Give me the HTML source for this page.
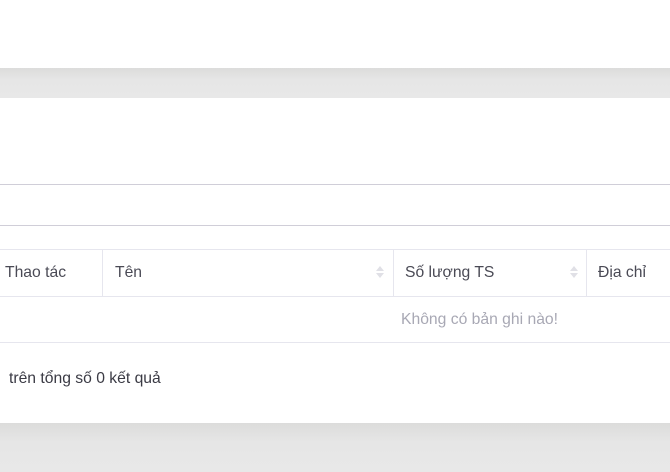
<!DOCTYPE html>
<html><head><meta charset="utf-8"><style>
body{margin:0;width:670px;height:472px;background:#fff;position:relative;overflow:hidden;font-family:"Liberation Sans",sans-serif;font-size:15.7px;color:#4a4a55}
.g{position:absolute;left:0;width:670px;background:linear-gradient(#dcdcdb,#e6e6e6 40%,#e8e8e8)}
.l{position:absolute;left:0;width:670px;height:1px}
.t{position:absolute;white-space:nowrap}
.v{position:absolute;width:1px;background:#e6e6ee;top:249px;height:47px}
.s{position:absolute;width:0;height:0;border-left:4px solid transparent;border-right:4px solid transparent}
</style></head><body>
<div class="g" style="top:68px;height:30px"></div>
<div class="l" style="top:184px;background:#d0ced8"></div>
<div class="l" style="top:225px;background:#d0ced8"></div>
<div class="l" style="top:249px;background:#e6e6ee"></div>
<div class="l" style="top:296px;background:#e6e6ee"></div>
<div class="l" style="top:342px;background:#e6e6ee"></div>
<div class="v" style="left:102px"></div>
<div class="v" style="left:393px"></div>
<div class="v" style="left:586px"></div>
<div class="t" style="left:5px;top:264px">Thao tác</div>
<div class="t" style="left:115px;top:264px">Tên</div>
<div class="t" style="left:405px;top:264px">Số lượng TS</div>
<div class="t" style="left:598px;top:264px">Địa chỉ</div>
<div class="s" style="left:376px;top:266px;border-bottom:5px solid #e0e0e6"></div>
<div class="s" style="left:376px;top:273px;border-top:5px solid #e0e0e6"></div>
<div class="s" style="left:570px;top:266px;border-bottom:5px solid #e0e0e6"></div>
<div class="s" style="left:570px;top:273px;border-top:5px solid #e0e0e6"></div>
<div class="t" style="left:401px;top:311px;color:#a8a8b4">Không có bản ghi nào!</div>
<div class="t" style="left:9px;top:370px;color:#3a3a44">trên tổng số 0 kết quả</div>
<div class="g" style="top:423px;height:49px"></div>
</body></html>
